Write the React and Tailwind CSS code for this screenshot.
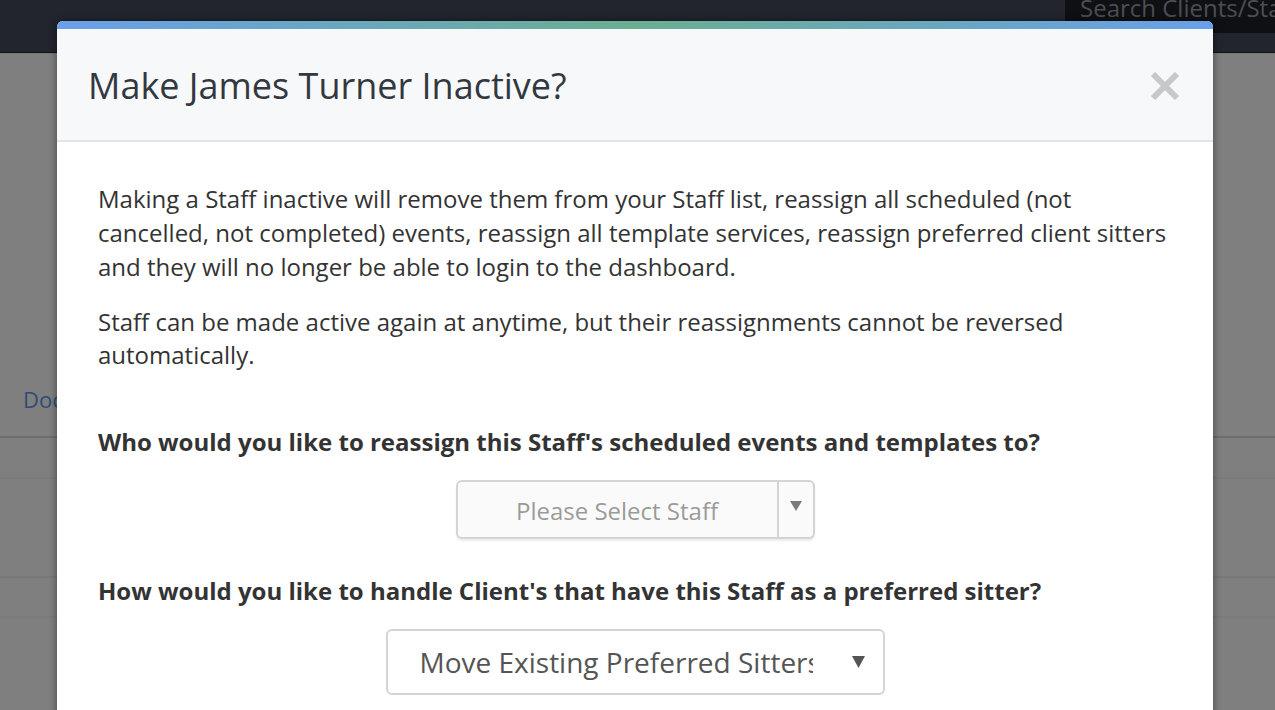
import React from "react";

export default function App() {
  const font = { fontFamily: '"Open Sans", "Noto Sans", sans-serif' };
  return (
    <div className="relative w-[1275px] h-[710px] overflow-hidden bg-[#7f7f7f]" style={font}>
      {/* Background page (dimmed) */}
      <div className="flex flex-col h-full">
        <div className="h-[53px] bg-[#22252e] flex justify-end border-b border-[#141518]">
          <div className="w-[210px] h-[33px] bg-[#0f1013] overflow-hidden flex items-start pl-[15px]">
            <span className="text-[24px] leading-[24px] text-[#4b4e54] whitespace-nowrap -mt-[4px]">Search Clients/Staff</span>
          </div>
        </div>
        <div className="h-[1px] bg-[#767676]" />
        <div className="h-[330px]" />
        <div className="h-[52px] flex items-start pl-[23px]">
          <span className="text-[22px] leading-[30px] text-[#2f4d73]">Documents</span>
        </div>
        <div className="h-[2px] bg-[#6e6e6e]" />
        <div className="h-[39px]" />
        <div className="h-[2px] bg-[#7a7a7a]" />
        <div className="h-[97px]" />
        <div className="h-[2px] bg-[#797979]" />
        <div className="h-[38px]" />
        <div className="h-[2px] bg-[#7a7a7a]" />
      </div>

      {/* Modal */}
      <div className="absolute left-[57px] top-[21px] w-[1156px] h-[720px] bg-white rounded-t-[6px] overflow-hidden shadow-[0_0_6px_2px_rgba(0,0,0,0.3)]">
        <div className="h-[8px] bg-[linear-gradient(to_right,#69a0ea,#6aaf92_50%,#69a0ea)]" />
        <div className="h-[113px] bg-[#f7f8fa] border-b-2 border-[#e5e5e5] flex items-center justify-between pl-[31px] pr-[33px]">
          <h1 className="text-[36px] leading-[44px] text-[#333840] font-normal mt-[2px]">Make James Turner Inactive?</h1>
          <svg width="30" height="28" viewBox="0 0 30 28" className="mt-[2px]">
            <path d="M3 2 L27 26 M27 2 L3 26" stroke="#c8c8c8" strokeWidth="6" />
          </svg>
        </div>
        <div className="px-[41px] pt-[40px] text-[#333]">
          <p className="text-[24px] leading-[34px]">
            Making a Staff inactive will remove them from your Staff list, reassign all scheduled (not cancelled, not completed) events, reassign all template services, reassign preferred client sitters and they will no longer be able to login to the dashboard.
          </p>
          <p className="text-[24px] leading-[33px] mt-[21px]">
            Staff can be made active again at anytime, but their reassignments cannot be reversed automatically.
          </p>
          <p className="text-[24px] leading-[34px] font-bold mt-[54px]">
            Who would you like to reassign this Staff's scheduled events and templates to?
          </p>
          <div className="flex justify-center mt-[21px]">
            <div className="w-[359px] h-[59px] flex rounded-[6px] border-2 border-[#d4d4d4] bg-[#fafafa] shadow-[0_2px_2px_rgba(0,0,0,0.08)]">
              <div className="flex-1 flex items-center justify-center">
                <span className="text-[24px] text-[#9a9a9a] mt-[2px]">Please Select Staff</span>
              </div>
              <div className="w-[36px] border-l-2 border-[#d4d4d4] flex justify-center pt-[19px]">
                <svg width="12" height="10" viewBox="0 0 12 10">
                  <path d="M0 0 L12 0 L6 10 Z" fill="#7a7a7a" />
                </svg>
              </div>
            </div>
          </div>
          <p className="text-[24px] leading-[34px] font-bold mt-[35px]">
            How would you like to handle Client's that have this Staff as a preferred sitter?
          </p>
          <div className="flex justify-center mt-[21px]">
            <div className="w-[499px] h-[66px] flex items-center rounded-[6px] border-2 border-[#d4d4d4] bg-white pl-[32px] pr-[18px]">
              <div className="w-[393px] overflow-hidden whitespace-nowrap">
                <span className="text-[28px] text-[#555]">Move Existing Preferred Sitters to Selected Staff</span>
              </div>
              <div className="flex-1 flex justify-end">
                <svg width="13" height="12" viewBox="0 0 13 12">
                  <path d="M0 0 L13 0 L6.5 12 Z" fill="#555" />
                </svg>
              </div>
            </div>
          </div>
        </div>
      </div>
    </div>
  );
}
